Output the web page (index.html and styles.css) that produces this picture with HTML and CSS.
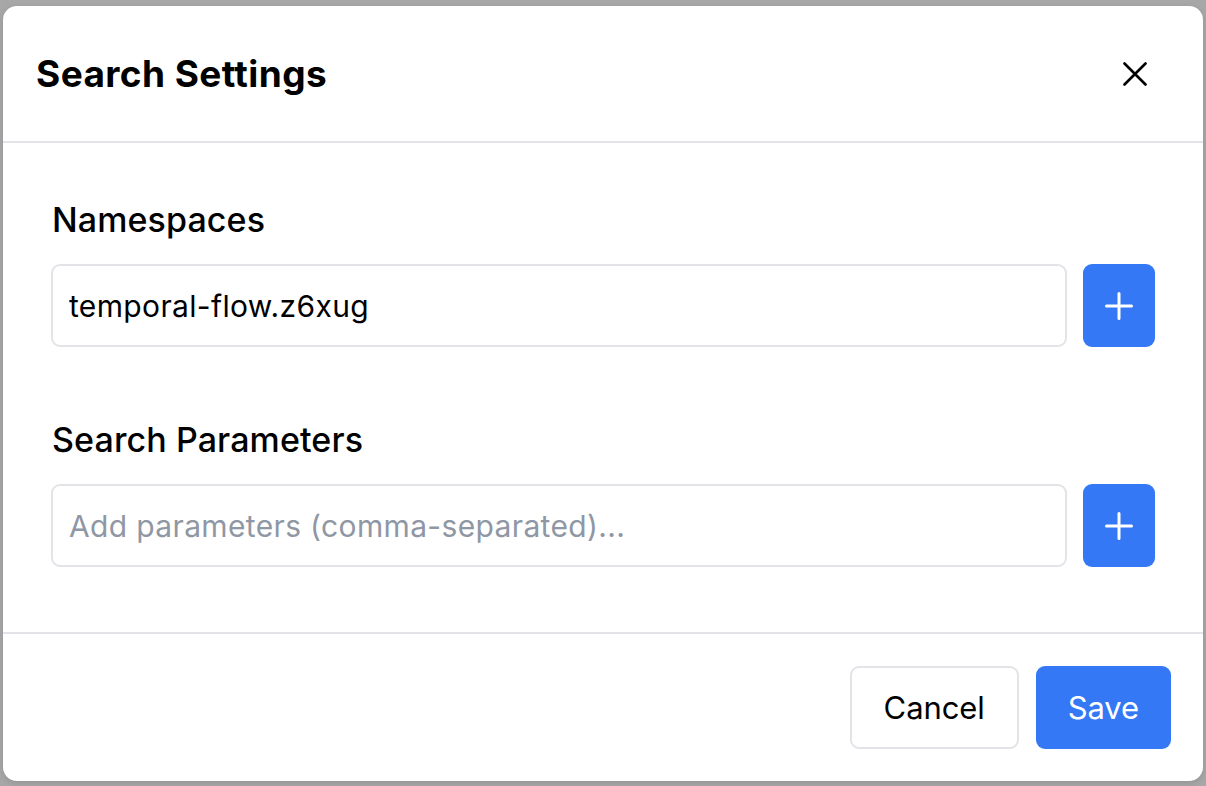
FILE: index.html
```html
<!DOCTYPE html>
<html lang="en">
<head>
<meta charset="utf-8">
<title>Search Settings</title>
<link rel="stylesheet" href="styles.css">
</head>
<body>
<div class="modal">
  <header class="modal-header">
    <h1 class="modal-title">Search Settings</h1>
    <button class="close-btn" aria-label="Close">
      <svg width="24" height="24" viewBox="0 0 24 24" fill="none" stroke="#000" stroke-width="2.6" stroke-linecap="round"><path d="M1.5 1.5L22.5 22.5M22.5 1.5L1.5 22.5"/></svg>
    </button>
  </header>
  <main class="modal-body">
    <section class="field">
      <label class="field-label">Namespaces</label>
      <div class="field-row">
        <input class="text-input" type="text" value="temporal-flow.z6xug">
        <button class="add-btn" aria-label="Add">
          <svg width="28" height="28" viewBox="0 0 28 28" fill="none" stroke="#fff" stroke-width="3" stroke-linecap="round"><path d="M14 1.5V26.5M1.5 14H26.5"/></svg>
        </button>
      </div>
    </section>
    <section class="field">
      <label class="field-label">Search Parameters</label>
      <div class="field-row">
        <input class="text-input" type="text" placeholder="Add parameters (comma-separated)...">
        <button class="add-btn" aria-label="Add">
          <svg width="28" height="28" viewBox="0 0 28 28" fill="none" stroke="#fff" stroke-width="3" stroke-linecap="round"><path d="M14 1.5V26.5M1.5 14H26.5"/></svg>
        </button>
      </div>
    </section>
  </main>
  <footer class="modal-footer">
    <button class="btn btn-secondary">Cancel</button>
    <button class="btn btn-primary">Save</button>
  </footer>
</div>
</body>
</html>
```
FILE: styles.css
```css
html, body {
  margin: 0;
  padding: 0;
}
body {
  background: #a7a7a7;
  font-family: Inter, "Noto Sans", "Liberation Sans", sans-serif;
  color: #000;
  width: 1206px;
  height: 786px;
  overflow: hidden;
}
.modal {
  margin: 6px 3px 0 3px;
  width: 1200px;
  height: 775px;
  background: #fff;
  border-radius: 14px;
  display: flex;
  flex-direction: column;
  box-shadow: 0 2px 6px rgba(0,0,0,0.12);
}
.modal-header {
  height: 135px;
  border-bottom: 2px solid #e3e3e8;
  display: flex;
  align-items: center;
  justify-content: space-between;
  padding: 0 56px 0 33px;
  flex-shrink: 0;
}
.modal-title {
  margin: 0;
  font-size: 37px;
  font-weight: 700;
  letter-spacing: 0.4px;
  line-height: 44px;
}
.close-btn {
  background: none;
  border: 0;
  padding: 0;
  width: 24px;
  height: 24px;
  display: flex;
  cursor: pointer;
}
.modal-body {
  padding: 55px 48px 0 48px;
  height: 491px;
  border-bottom: 2px solid #e3e3e8;
  box-sizing: border-box;
  flex-shrink: 0;
  display: flex;
  flex-direction: column;
  gap: 71px;
}
.field {
  display: flex;
  flex-direction: column;
  gap: 22px;
}
.field-label {
  font-size: 34px;
  font-weight: 500;
  line-height: 44px;
  letter-spacing: 0.1px;
  padding-left: 1px;
}
.field-row {
  display: flex;
  gap: 16px;
}
.text-input {
  flex: 1;
  height: 83px;
  box-sizing: border-box;
  border: 2px solid #e3e3e8;
  border-radius: 9px;
  padding: 0 16px;
  font-family: inherit;
  font-size: 30px;
  color: #000;
  outline: none;
  letter-spacing: 0.35px;
}
.text-input::placeholder {
  color: #8f97a4;
}
.add-btn {
  width: 72px;
  height: 83px;
  flex-shrink: 0;
  border: 0;
  border-radius: 9px;
  background: #3478f6;
  display: flex;
  align-items: center;
  justify-content: center;
  padding: 0;
  cursor: pointer;
}
.modal-footer {
  flex: 1;
  display: flex;
  justify-content: flex-end;
  align-items: flex-start;
  gap: 17px;
  padding: 32px 32px 0 0;
}
.btn {
  height: 83px;
  box-sizing: border-box;
  border-radius: 9px;
  font-family: inherit;
  font-size: 31px;
  font-weight: 400;
  padding: 0 32px;
  cursor: pointer;
  letter-spacing: -0.1px;
}
.btn-secondary {
  background: #fff;
  border: 2px solid #e3e3e8;
  color: #000;
}
.btn-primary {
  background: #3478f6;
  border: 0;
  color: #fff;
}
```
